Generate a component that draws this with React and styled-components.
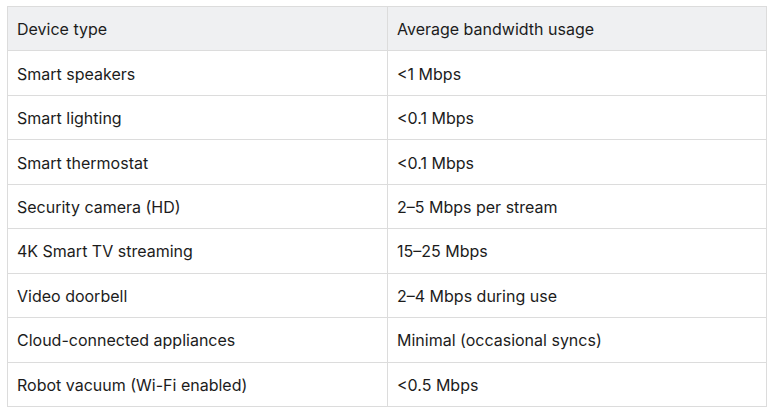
import React from "react";
import styled, { createGlobalStyle } from "styled-components";

const GlobalStyle = createGlobalStyle`
    html, body {
        margin: 0;
        padding: 0;
        background: #ffffff;
    }
`;

const Wrapper = styled.div`
    width: 772px;
    height: 412px;
    box-sizing: border-box;
    padding: 6px 5px 0 7px;
    background: #ffffff;
    font-family: Inter, "Open Sans", sans-serif;
    color: #1c1c1c;
`;

const Table = styled.table`
    width: 760px;
    border-collapse: collapse;
    font-size: 16px;
`;

const HeadRow = styled.tr`
    background: #eff0f2;
`;

const Cell = styled.td`
    height: 44.44px;
    box-sizing: border-box;
    padding: 1px 9px 0;
    border: 1px solid #dcdcdc;
    text-align: left;
    font-weight: 400;
    vertical-align: middle;
    width: ${(props) => (props.$first ? "380px" : "auto")};
`;

const rows = [
    ["Smart speakers", "<1 Mbps"],
    ["Smart lighting", "<0.1 Mbps"],
    ["Smart thermostat", "<0.1 Mbps"],
    ["Security camera (HD)", "2–5 Mbps per stream"],
    ["4K Smart TV streaming", "15–25 Mbps"],
    ["Video doorbell", "2–4 Mbps during use"],
    ["Cloud-connected appliances", "Minimal (occasional syncs)"],
    ["Robot vacuum (Wi-Fi enabled)", "<0.5 Mbps"],
];

function App() {
    return (
        <Wrapper>
            <GlobalStyle />
            <Table>
                <thead>
                    <HeadRow>
                        <Cell as="th" $first>Device type</Cell>
                        <Cell as="th">Average bandwidth usage</Cell>
                    </HeadRow>
                </thead>
                <tbody>
                    {rows.map(([device, usage]) => (
                        <tr key={device}>
                            <Cell $first>{device}</Cell>
                            <Cell>{usage}</Cell>
                        </tr>
                    ))}
                </tbody>
            </Table>
        </Wrapper>
    );
}

export default App;
